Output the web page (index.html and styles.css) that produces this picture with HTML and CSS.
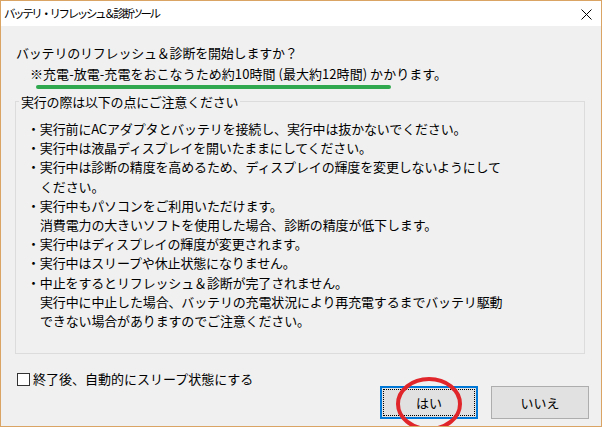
FILE: index.html
```html
<!DOCTYPE html>
<html lang="ja">
<head>
    <meta charset="UTF-8">
    <title>バッテリ・リフレッシュ＆診断ツール</title>
    <link rel="stylesheet" href="styles.css">
</head>
<body>
    <div class="window">
        <div class="titlebar">
            <span class="title">バッテリ・リフレッシュ＆診断ツール</span>
            <svg class="close" width="11" height="11" viewBox="0 0 11 11">
                <path d="M0.5 0.5 L10.5 10.5 M10.5 0.5 L0.5 10.5" stroke="#000" stroke-width="1" fill="none"/>
            </svg>
        </div>

        <div class="content">
            <p class="question">バッテリのリフレッシュ＆診断を開始しますか？</p>
            <p class="note">※充電-放電-充電をおこなうため約10時間 (最大約12時間) かかります。</p>
            <div class="marker"></div>

            <fieldset class="group">
                <legend>実行の際は以下の点にご注意ください</legend>
                <ul class="points">
                    <li>・実行前にACアダプタとバッテリを接続し、実行中は抜かないでください。</li>
                    <li>・実行中は液晶ディスプレイを開いたままにしてください。</li>
                    <li>・実行中は診断の精度を高めるため、ディスプレイの輝度を変更しないようにして<br>ください。</li>
                    <li>・実行中もパソコンをご利用いただけます。<br>消費電力の大きいソフトを使用した場合、診断の精度が低下します。</li>
                    <li>・実行中はディスプレイの輝度が変更されます。</li>
                    <li>・実行中はスリープや休止状態になりません。</li>
                    <li>・中止をするとリフレッシュ＆診断が完了されません。<br>実行中に中止した場合、バッテリの充電状況により再充電するまでバッテリ駆動<br>できない場合がありますのでご注意ください。</li>
                </ul>
            </fieldset>

            <label class="check">
                <span class="box"></span>
                <span>終了後、自動的にスリープ状態にする</span>
            </label>

            <div class="actions">
                <button class="btn default">はい</button>
                <button class="btn">いいえ</button>
            </div>
        </div>

        <!-- red circle drawn over the OK button -->
        <svg class="circle" width="72" height="60" viewBox="0 0 72 60">
            <ellipse cx="36" cy="30" rx="31" ry="25" fill="none" stroke="#e1262b" stroke-width="4"/>
        </svg>
    </div>
</body>
</html>
```

FILE: styles.css
```css
body {
    margin: 0;
    padding: 0;
    background-color: #ffffff;
    font-family: "Noto Sans CJK JP", "Noto Sans", sans-serif;
    color: #000;
}

.window {
    position: relative;
    width: 602px;
    height: 427px;
    box-sizing: border-box;
    border: 1px solid #d9a464;
    display: flex;
    flex-direction: column;
    overflow: hidden;
}

.titlebar {
    height: 25px;
    background-color: #fff;
    display: flex;
    align-items: center;
    justify-content: space-between;
    padding: 0 9px 0 3px;
}

.title {
    font-size: 11.5px;
    letter-spacing: -2.4px;
    line-height: 25px;
}

.close {
    display: block;
    margin-top: 1px;
}

.content {
    flex: 1;
    background-color: #f0f0f0;
    padding: 16px 12px 0 14px;
    font-size: 13px;
}

.question,
.note {
    margin: 0;
    line-height: 21px;
}

.question {
    padding-left: 1px;
    letter-spacing: -0.2px;
}

.note {
    padding-left: 15px;
    letter-spacing: 0.05px;
}

.marker {
    width: 355px;
    height: 4px;
    margin: 1px 0 0 21px;
    border-radius: 2px;
    background-color: #2fa84f;
}

.group {
    width: 570px;
    box-sizing: border-box;
    margin: 3px 0 0 0;
    padding: 0 0 23px 0;
    border: 1px solid #dcdcdc;
}

.group legend {
    margin-left: 3px;
    padding: 0 2px;
    line-height: 19px;
    letter-spacing: -0.2px;
}

.points {
    list-style: none;
    margin: 8px 0 0 0;
    padding: 0 0 0 11px;
}

.points li {
    line-height: 19.2px;
    padding-left: 13px;
    text-indent: -13px;
    letter-spacing: -0.15px;
}

.check {
    display: flex;
    align-items: center;
    height: 14px;
    margin: 18px 0 0 2px;
    line-height: 14px;
}

.box {
    width: 11px;
    height: 11px;
    border: 1px solid #333;
    background-color: #fff;
    margin-right: 3px;
}

.actions {
    display: flex;
    justify-content: flex-end;
    gap: 13px;
}

.btn {
    width: 98px;
    height: 33px;
    box-sizing: border-box;
    border: 1px solid #adadad;
    background-color: #e1e1e1;
    font-family: "Noto Sans CJK JP", sans-serif;
    font-size: 13px;
    color: #000;
    padding: 0;
}

.btn.default {
    border: 2px solid #0078d7;
    outline: 1px dotted #000;
    outline-offset: -4px;
}

.circle {
    position: absolute;
    left: 392px;
    top: 373px;
}
```
